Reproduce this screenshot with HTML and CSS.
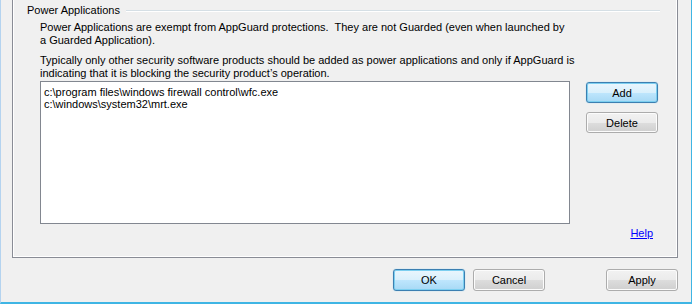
FILE: index.html
```html
<!DOCTYPE html>
<html lang="en">
<head>
  <meta charset="UTF-8">
  <title>AppGuard - Power Applications</title>
  <link rel="stylesheet" href="styles.css">
</head>
<body>
  <div class="ventana">
    <div class="panel">
      <div class="grupo-titulo">
        <span>Power Applications</span>
        <span class="linea"></span>
      </div>
      <div class="grupo">
        <p class="texto">Power Applications are exempt from AppGuard protections.&nbsp; They are not Guarded (even when launched by<br>a Guarded Application).</p>
        <p class="texto segundo">Typically only other security software products should be added as power applications and only if AppGuard is<br>indicating that it is blocking the security product&rsquo;s operation.</p>

        <div class="fila-lista">
          <div class="lista">
            <div>c:\program files\windows firewall control\wfc.exe</div>
            <div>c:\windows\system32\mrt.exe</div>
          </div>
          <div class="botones-lado">
            <button class="boton principal">Add</button>
            <button class="boton">Delete</button>
          </div>
        </div>

        <div class="fila-ayuda">
          <a href="#" class="ayuda">Help</a>
        </div>
      </div>
    </div>

    <div class="botones-dialogo">
      <button class="boton principal">OK</button>
      <button class="boton">Cancel</button>
      <button class="boton aplicar">Apply</button>
    </div>
  </div>
</body>
</html>
```

FILE: styles.css
```css
* {
  box-sizing: border-box;
}

body {
  margin: 0;
  font-family: "Liberation Sans", Arial, sans-serif;
  font-size: 11px;
  color: #000;
  background: #f0f0f0;
}

.ventana {
  width: 692px;
  height: 304px;
  background: #f0f0f0;
  border-left: 1px solid #b4d3ef;
  border-right: 1px solid #3fb5e4;
  border-bottom: 2px solid #3fb5e4;
}

/* panel de la pestaña */
.panel {
  margin-left: 11px;
  width: 666px;
  height: 258px;
  border: 1px solid #898c95;
  border-top: none;
  box-shadow: inset 1px 0 #fff, inset -1px -1px #fff;
}

.grupo-titulo {
  display: flex;
  align-items: center;
  padding: 4px 17px 0 14px;
  height: 16px;
  line-height: 13px;
}

.grupo-titulo .linea {
  flex: 1;
  height: 2px;
  margin-left: 6px;
  margin-top: 1px;
  border-top: 1px solid #d5dfe5;
  border-bottom: 1px solid #fff;
}

.grupo {
  padding-left: 27px;
}

.texto {
  margin: 5px 0 0;
  line-height: 13px;
}

.texto.segundo {
  margin-top: 7px;
}

.fila-lista {
  display: flex;
  margin-top: 1px;
}

.lista {
  width: 530px;
  height: 143px;
  background: #fff;
  border: 1px solid #828790;
  padding: 4px 0 0 3px;
  line-height: 12px;
}

.botones-lado {
  display: flex;
  flex-direction: column;
  gap: 9px;
  margin-left: 16px;
  padding-top: 1px;
}

.boton {
  width: 72px;
  height: 21px;
  padding: 0;
  font-family: inherit;
  font-size: 11px;
  color: #000;
  border: 1px solid #acacac;
  border-radius: 3px;
  background: linear-gradient(#f2f2f2, #ebebeb 50%, #dddddd 51%, #cfcfcf);
  box-shadow: inset 0 0 0 1px #fcfcfc;
}

.boton.principal {
  border-color: #3c7fb1;
  background: linear-gradient(#eaf6fd, #d9f0fc 50%, #bee6fd 51%, #a7d9f5);
  box-shadow: inset 0 0 0 1px #7ccff0, 0 0 1px #6cc5ee;
}

.fila-ayuda {
  display: flex;
  justify-content: flex-end;
  padding-right: 24px;
  margin-top: 3px;
}

.ayuda {
  color: #0000ff;
  text-decoration: underline;
}

.botones-dialogo {
  display: flex;
  gap: 8px;
  padding: 11px 13px 0 392px;
}

.botones-dialogo .boton {
  height: 22px;
}

.boton.aplicar {
  margin-left: auto;
}
```
